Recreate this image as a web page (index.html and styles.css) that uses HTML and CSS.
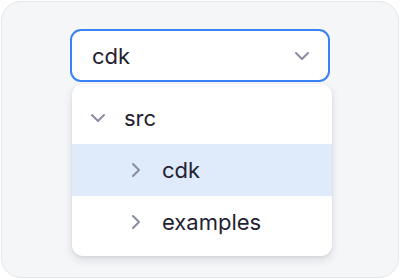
FILE: index.html
```html
<!DOCTYPE html>
<html>
<head>
<meta charset="utf-8">
<link rel="stylesheet" href="styles.css">
</head>
<body>
<div class="card">
  <div class="select">
    <div class="field">
      <span class="value">cdk</span>
      <svg class="caret" width="16" height="10" viewBox="0 0 16 10"><path d="M2 2 L8 8 L14 2" fill="none" stroke="#8a8ca4" stroke-width="2" stroke-linecap="round" stroke-linejoin="round"/></svg>
    </div>
    <ul class="menu">
      <li class="row">
        <span class="icon"><svg width="16" height="10" viewBox="0 0 16 10"><path d="M2 2 L8 8 L14 2" fill="none" stroke="#8a8ca4" stroke-width="2" stroke-linecap="round" stroke-linejoin="round"/></svg></span>
        <span class="label">src</span>
      </li>
      <li class="row child active">
        <span class="icon"><svg width="10" height="16" viewBox="0 0 10 16"><path d="M2 2 L8 8 L2 14" fill="none" stroke="#8a8ca4" stroke-width="2" stroke-linecap="round" stroke-linejoin="round"/></svg></span>
        <span class="label">cdk</span>
      </li>
      <li class="row child">
        <span class="icon"><svg width="10" height="16" viewBox="0 0 10 16"><path d="M2 2 L8 8 L2 14" fill="none" stroke="#8a8ca4" stroke-width="2" stroke-linecap="round" stroke-linejoin="round"/></svg></span>
        <span class="label">examples</span>
      </li>
    </ul>
  </div>
</div>
</body>
</html>
```
FILE: styles.css
```css
html, body {
  margin: 0;
  padding: 0;
  background: #ffffff;
}
body {
  width: 400px;
  height: 280px;
  font-family: Inter, "Noto Sans", sans-serif;
  color: #1f2230;
}
.card {
  box-sizing: border-box;
  margin: 1px;
  width: 398px;
  height: 277px;
  background: #f5f6f8;
  border: 1.5px solid #e4e6ec;
  border-radius: 20px;
  padding-top: 27px;
  padding-left: 68px;
}
.select {
  width: 262px;
}
.field {
  box-sizing: border-box;
  width: 260px;
  height: 53px;
  border: 2.5px solid #3b82f6;
  border-radius: 11px;
  background: #ffffff;
  display: flex;
  align-items: center;
  justify-content: space-between;
  padding: 0 18px 0 20px;
}
.value {
  font-size: 22px;
  line-height: 1;
}
.menu {
  list-style: none;
  margin: 2px 0 0 2px;
  padding: 8px 0;
  width: 260px;
  background: #ffffff;
  border-radius: 11px;
  box-shadow: 0 4px 10px rgba(30, 35, 60, 0.12), 0 1px 3px rgba(30, 35, 60, 0.08);
}
.row {
  height: 52px;
  display: flex;
  align-items: center;
  padding-left: 16px;
  gap: 16px;
}
.row.child {
  padding-left: 54px;
}
.row.active {
  background: #dfeafb;
}
.icon {
  width: 20px;
  display: flex;
  justify-content: center;
}
.label {
  font-size: 22px;
  line-height: 1;
}
```
